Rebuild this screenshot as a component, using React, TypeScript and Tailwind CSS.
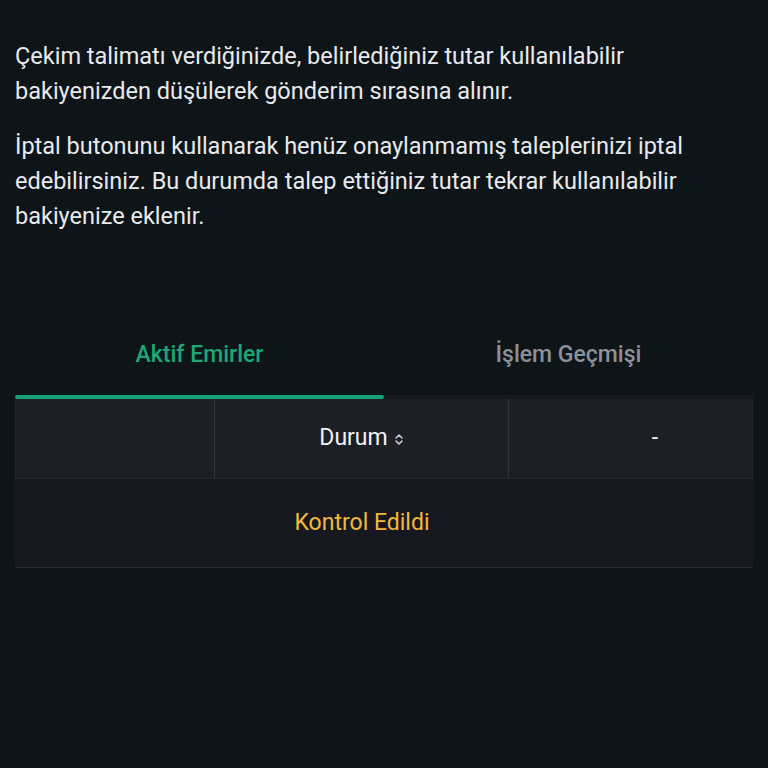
import React from "react";

function SortIcon() {
  return (
    <svg width="10" height="15" viewBox="0 0 10 15" fill="none" stroke="currentColor" strokeWidth="1.6" strokeLinecap="round" strokeLinejoin="round">
      <path d="M2 6 L5 3 L8 6" />
      <path d="M2 9 L5 12 L8 9" />
    </svg>
  );
}

export default function App() {
  return (
    <div
      className="w-[768px] h-[768px] bg-[#0e1519] text-[#e8eaed] overflow-hidden"
      style={{ fontFamily: "Roboto, 'Noto Sans', sans-serif" }}
    >
      <div className="px-[15px] pt-[39px]">
        <p className="text-[23.5px] leading-[35px]">
          Çekim talimatı verdiğinizde, belirlediğiniz tutar kullanılabilir bakiyenizden düşülerek gönderim sırasına alınır.
        </p>
        <p className="text-[23.5px] leading-[35px] mt-[20px]">
          İptal butonunu kullanarak henüz onaylanmamış taleplerinizi iptal edebilirsiniz. Bu durumda talep ettiğiniz tutar tekrar kullanılabilir bakiyenize eklenir.
        </p>
      </div>

      <div className="mx-[15px] mt-[88px]">
        <div className="flex">
          <div className="flex-1 flex flex-col">
            <div className="h-[73px] pb-[6px] flex items-center justify-center text-[23px] font-medium text-[#1ba776]">
              Aktif Emirler
            </div>
            <div className="h-[4px] bg-[#16a37a] rounded-full"></div>
          </div>
          <div className="flex-1 flex flex-col">
            <div className="h-[73px] pb-[6px] flex items-center justify-center text-[23px] font-medium text-[#8b9099]">
              İşlem Geçmişi
            </div>
            <div className="h-[4px] bg-[#161a20]"></div>
          </div>
        </div>
        <div className="flex h-[80px] bg-[#1d1f27] border-b border-[#262932]">
          <div className="w-[200px] border-r border-[#30333b]"></div>
          <div className="w-[294px] border-r border-[#30333b] flex items-center justify-center gap-[6px] text-[23px] text-[#f2f3f5]">
            Durum
            <span className="text-[#c9ccd2] mt-[2px]"><SortIcon /></span>
          </div>
          <div className="flex-1 flex items-center justify-center pl-[48px] text-[23px] text-[#f2f3f5]">-</div>
        </div>
        <div className="flex h-[89px] bg-[#17181f] border-b border-[#262932]">
          <div className="w-[200px]"></div>
          <div className="w-[294px] flex items-center justify-center text-[23px] text-[#f0b93a]">
            Kontrol Edildi
          </div>
          <div className="flex-1"></div>
        </div>
      </div>
    </div>
  );
}
